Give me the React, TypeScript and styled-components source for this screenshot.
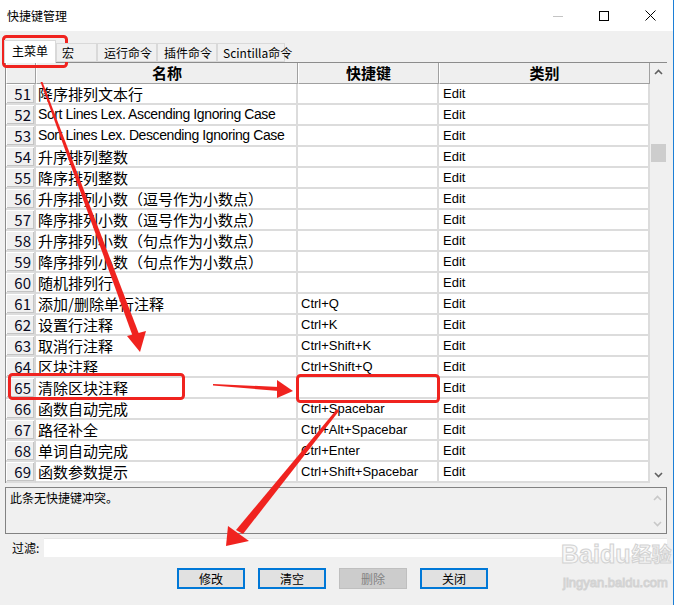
import React from "react";
import styled, { createGlobalStyle } from "styled-components";

const GlobalStyle = createGlobalStyle`
  html, body { margin: 0; padding: 0; background: #ffffff; overflow: hidden; }
  * { box-sizing: border-box; }
`;

const CJK = `"Noto Sans CJK SC", "Noto Sans", sans-serif`;
const LATIN = `"Liberation Sans", "Noto Sans CJK SC", sans-serif`;

const Page = styled.div`
  position: relative;
  width: 675px;
  height: 605px;
`;

const Window = styled.div`
  width: 674px;
  height: 605px;
  border-right: 1px solid #1c7fd6;
  display: flex;
  flex-direction: column;
  background: #f0f0f0;
  font-family: ${CJK};
  color: #000;
`;

const TitleBar = styled.div`
  height: 31px;
  flex: none;
  background: #ffffff;
  display: flex;
  align-items: center;
`;

const Title = styled.div`
  padding-left: 7px;
  font-size: 12px;
  line-height: 16px;
`;

const Controls = styled.div`
  margin-left: auto;
  display: flex;
`;

const ControlButton = styled.div`
  width: 46px;
  height: 31px;
  display: flex;
  align-items: center;
  justify-content: center;
`;

const Content = styled.div`
  flex: 1;
  display: flex;
  flex-direction: column;
  padding: 9px 6px 0 5px;
`;

const TabStrip = styled.div`
  height: 22px;
  display: flex;
  align-items: flex-end;
  margin-left: -1px;
  position: relative;
  z-index: 1;
`;

const Tab = styled.div<{ $active?: boolean; $w: number; $pl: number }>`
  width: ${(p) => p.$w}px;
  height: ${(p) => (p.$active ? 23 : 19)}px;
  margin-bottom: ${(p) => (p.$active ? -1 : 0)}px;
  padding-left: ${(p) => p.$pl}px;
  background: ${(p) => (p.$active ? "#ffffff" : "#f0f0f0")};
  border: 1px solid #d9d9d9;
  border-bottom: ${(p) => (p.$active ? "none" : "1px solid #d9d9d9")};
  font-size: 12px;
  line-height: ${(p) => (p.$active ? 20 : 17)}px;
  white-space: nowrap;
`;

const GridFrame = styled.div`
  height: 421px;
  flex: none;
  display: flex;
  border-top: 1px solid #8c8c8c;
  border-left: 1px solid #8c8c8c;
  background: #ffffff;
`;

const Table = styled.div`
  display: grid;
  grid-template-columns: 30px 262px 141px 211px;
  grid-auto-rows: 21px;
  align-content: start;
`;

const HeaderCell = styled.div`
  background: #efefef;
  border-right: 1px solid #a0a0a0;
  border-bottom: 1px solid #a0a0a0;
  border-left: 1px solid #ffffff;
  font-size: 15px;
  font-weight: 700;
  line-height: 19px;
  text-align: center;
  white-space: nowrap;
`;

const RowHead = styled.div`
  background: #f0f0f0;
  border-right: 2px solid #d6d6d6;
  border-bottom: 2px solid #dcdcdc;
  box-shadow: inset 1px 1px 0 #ffffff, inset -1px -1px 0 #c4c4c4;
  font-size: 15px;
  line-height: 19px;
  text-align: right;
  padding-right: 3px;
  color: #0a0a1e;
`;

const Cell = styled.div<{ $latin?: boolean; $wide?: boolean; $pl: number }>`
  border-right: 2px solid #dcdcdc;
  border-bottom: 2px solid #dcdcdc;
  padding-left: ${(p) => p.$pl}px;
  font-family: ${(p) => (p.$latin || p.$wide ? LATIN : CJK)};
  font-size: ${(p) => (p.$wide ? 14 : p.$latin ? 13 : 15)}px;
  letter-spacing: ${(p) => (p.$wide ? "-0.4px" : "normal")};
  line-height: 19px;
  white-space: nowrap;
  overflow: hidden;
`;

const Scrollbar = styled.div`
  width: 17px;
  flex: none;
  background: #f0f0f0;
  display: flex;
  flex-direction: column;
`;

const ArrowBox = styled.div`
  height: 17px;
  flex: none;
  display: flex;
  align-items: center;
  justify-content: center;
`;

const Track = styled.div`
  flex: 1;
  padding: 0 1px;
`;

const Thumb = styled.div<{ $top: number; $h: number }>`
  margin-top: ${(p) => p.$top}px;
  height: ${(p) => p.$h}px;
  background: #cdcdcd;
`;

const InfoBox = styled.div`
  margin-top: 4px;
  height: 47px;
  flex: none;
  border: 1px solid #828282;
  background: #f0f0f0;
  display: flex;
`;

const InfoText = styled.div`
  flex: 1;
  padding: 2px 4px;
  font-size: 12px;
  line-height: 16px;
`;

const InfoScroll = styled.div`
  width: 17px;
  display: flex;
  flex-direction: column;
  justify-content: space-between;
  padding: 1px 0;
`;

const FilterRow = styled.div`
  margin-top: 4px;
  height: 19px;
  flex: none;
  display: flex;
  align-items: center;
`;

const FilterLabel = styled.div`
  width: 39px;
  padding-left: 7px;
  font-size: 12px;
  line-height: 19px;
`;

const FilterInput = styled.div`
  flex: 1;
  height: 19px;
  background: #ffffff;
  border-top: 1px solid #e6e6e6;
`;

const ButtonRow = styled.div`
  margin-top: 11px;
  display: flex;
  gap: 13px;
  padding-left: 172px;
`;

const Button = styled.div<{ $disabled?: boolean }>`
  width: 68px;
  height: 21px;
  display: flex;
  align-items: center;
  justify-content: center;
  font-size: 12px;
  background: ${(p) => (p.$disabled ? "#cccccc" : "#e1e1e1")};
  border: ${(p) => (p.$disabled ? "1px solid #bfbfbf" : "2px solid #0078d7")};
  color: ${(p) => (p.$disabled ? "#838383" : "#000")};
`;

const Overlay = styled.svg`
  position: absolute;
  left: 0;
  top: 0;
  pointer-events: none;
`;

const Watermark = styled.div`
  position: absolute;
  left: 561px;
  top: 540px;
  white-space: nowrap;
  font-family: "Liberation Sans", "Noto Sans CJK SC", sans-serif;
  color: #f7f7f7;
  -webkit-text-stroke: 1px #d2d2d2;
  pointer-events: none;
`;

const WmTop = styled.div`
  display: flex;
  align-items: center;
  font-size: 25px;
  font-weight: 700;
  line-height: 28px;
`;

const WmCn = styled.span`
  font-family: "Noto Sans CJK SC", sans-serif;
  font-size: 20px;
  line-height: 28px;
  margin-left: 1px;
`;

const WmBottom = styled.div`
  font-size: 13px;
  line-height: 16px;
  margin-top: 7px;
  padding-left: 2px;
`;

type Row = { n: number; name: string; key: string };

const rows: Row[] = [
  { n: 51, name: "降序排列文本行", key: "" },
  { n: 52, name: "Sort Lines Lex. Ascending Ignoring Case", key: "" },
  { n: 53, name: "Sort Lines Lex. Descending Ignoring Case", key: "" },
  { n: 54, name: "升序排列整数", key: "" },
  { n: 55, name: "降序排列整数", key: "" },
  { n: 56, name: "升序排列小数（逗号作为小数点）", key: "" },
  { n: 57, name: "降序排列小数（逗号作为小数点）", key: "" },
  { n: 58, name: "升序排列小数（句点作为小数点）", key: "" },
  { n: 59, name: "降序排列小数（句点作为小数点）", key: "" },
  { n: 60, name: "随机排列行", key: "" },
  { n: 61, name: "添加/删除单行注释", key: "Ctrl+Q" },
  { n: 62, name: "设置行注释", key: "Ctrl+K" },
  { n: 63, name: "取消行注释", key: "Ctrl+Shift+K" },
  { n: 64, name: "区块注释", key: "Ctrl+Shift+Q" },
  { n: 65, name: "清除区块注释", key: "" },
  { n: 66, name: "函数自动完成", key: "Ctrl+Spacebar" },
  { n: 67, name: "路径补全", key: "Ctrl+Alt+Spacebar" },
  { n: 68, name: "单词自动完成", key: "Ctrl+Enter" },
  { n: 69, name: "函数参数提示", key: "Ctrl+Shift+Spacebar" },
];

const isLatin = (s: string) => /^[\x20-\x7e]+$/.test(s);

const tabs = [
  { label: "主菜单", w: 52, pl: 7, active: true },
  { label: "宏", w: 41, pl: 5 },
  { label: "运行命令", w: 60, pl: 6 },
  { label: "插件命令", w: 60, pl: 6 },
  { label: "Scintilla命令", w: 68, pl: 5 },
];

const Chevron = ({ up, color }: { up?: boolean; color: string }) => (
  <svg width="9" height="6" viewBox="0 0 9 6">
    <path
      d={up ? "M1 5 L4.5 1.5 L8 5" : "M1 1 L4.5 4.5 L8 1"}
      fill="none"
      stroke={color}
      strokeWidth="1.6"
    />
  </svg>
);

const RED = "#f0231f";

const Annotations = () => (
  <Overlay width="675" height="605" viewBox="0 0 675 605">
    <g fill="none" stroke={RED} strokeWidth="3">
      <rect x="3.5" y="36.5" width="63" height="30" rx="3" />
      <rect x="9.5" y="374.5" width="174" height="24" rx="3" />
      <rect x="297.5" y="375.5" width="141" height="26" rx="3" />
    </g>
    <g fill={RED}>
      <polygon points="40.5,82 42.5,82 139,334 133,337" />
      <polygon points="127,336 146,331 140,352" />
      <polygon points="213,384 213,385.5 279,391 279,387" />
      <polygon points="277,380 293,391 277,398" />
      <polygon points="337,409 339,411 243,534 236,530" />
      <polygon points="228,526 249,541 226,546" />
    </g>
  </Overlay>
);

export default function App() {
  return (
    <Page>
      <GlobalStyle />
      <Window>
        <TitleBar>
          <Title>快捷键管理</Title>
          <Controls>
            <ControlButton>
              <svg width="10" height="10" viewBox="0 0 10 10">
                <line x1="0" y1="5.5" x2="10" y2="5.5" stroke="#c4c4c4" strokeWidth="1" />
              </svg>
            </ControlButton>
            <ControlButton>
              <svg width="10" height="10" viewBox="0 0 10 10">
                <rect x="0.5" y="0.5" width="9" height="9" fill="none" stroke="#000" strokeWidth="1" />
              </svg>
            </ControlButton>
            <ControlButton>
              <svg width="11" height="11" viewBox="0 0 11 11">
                <path d="M0.5 0.5 L10.5 10.5 M10.5 0.5 L0.5 10.5" stroke="#000" strokeWidth="1" />
              </svg>
            </ControlButton>
          </Controls>
        </TitleBar>
        <Content>
          <TabStrip>
            {tabs.map((t) => (
              <Tab key={t.label} $active={t.active} $w={t.w} $pl={t.pl}>
                {t.label}
              </Tab>
            ))}
          </TabStrip>
          <GridFrame>
            <Table>
              <HeaderCell />
              <HeaderCell>名称</HeaderCell>
              <HeaderCell>快捷键</HeaderCell>
              <HeaderCell>类别</HeaderCell>
              {rows.map((r) => (
                <React.Fragment key={r.n}>
                  <RowHead>{r.n}</RowHead>
                  <Cell $pl={2} $wide={isLatin(r.name)}>
                    {r.name}
                  </Cell>
                  <Cell $pl={3} $latin>
                    {r.key}
                  </Cell>
                  <Cell $pl={4} $latin>
                    Edit
                  </Cell>
                </React.Fragment>
              ))}
            </Table>
            <Scrollbar>
              <ArrowBox>
                <Chevron up color="#606060" />
              </ArrowBox>
              <Track>
                <Thumb $top={64} $h={18} />
              </Track>
              <ArrowBox>
                <Chevron color="#606060" />
              </ArrowBox>
            </Scrollbar>
          </GridFrame>
          <InfoBox>
            <InfoText>此条无快捷键冲突。</InfoText>
            <InfoScroll>
              <ArrowBox>
                <Chevron up color="#c8c8c8" />
              </ArrowBox>
              <ArrowBox>
                <Chevron color="#c8c8c8" />
              </ArrowBox>
            </InfoScroll>
          </InfoBox>
          <FilterRow>
            <FilterLabel>过滤:</FilterLabel>
            <FilterInput />
          </FilterRow>
          <ButtonRow>
            <Button>修改</Button>
            <Button>清空</Button>
            <Button $disabled>删除</Button>
            <Button>关闭</Button>
          </ButtonRow>
        </Content>
      </Window>
      <Watermark>
        <WmTop>
          Baidu<WmCn>经验</WmCn>
        </WmTop>
        <WmBottom>jingyan.baidu.com</WmBottom>
      </Watermark>
      <Annotations />
    </Page>
  );
}
